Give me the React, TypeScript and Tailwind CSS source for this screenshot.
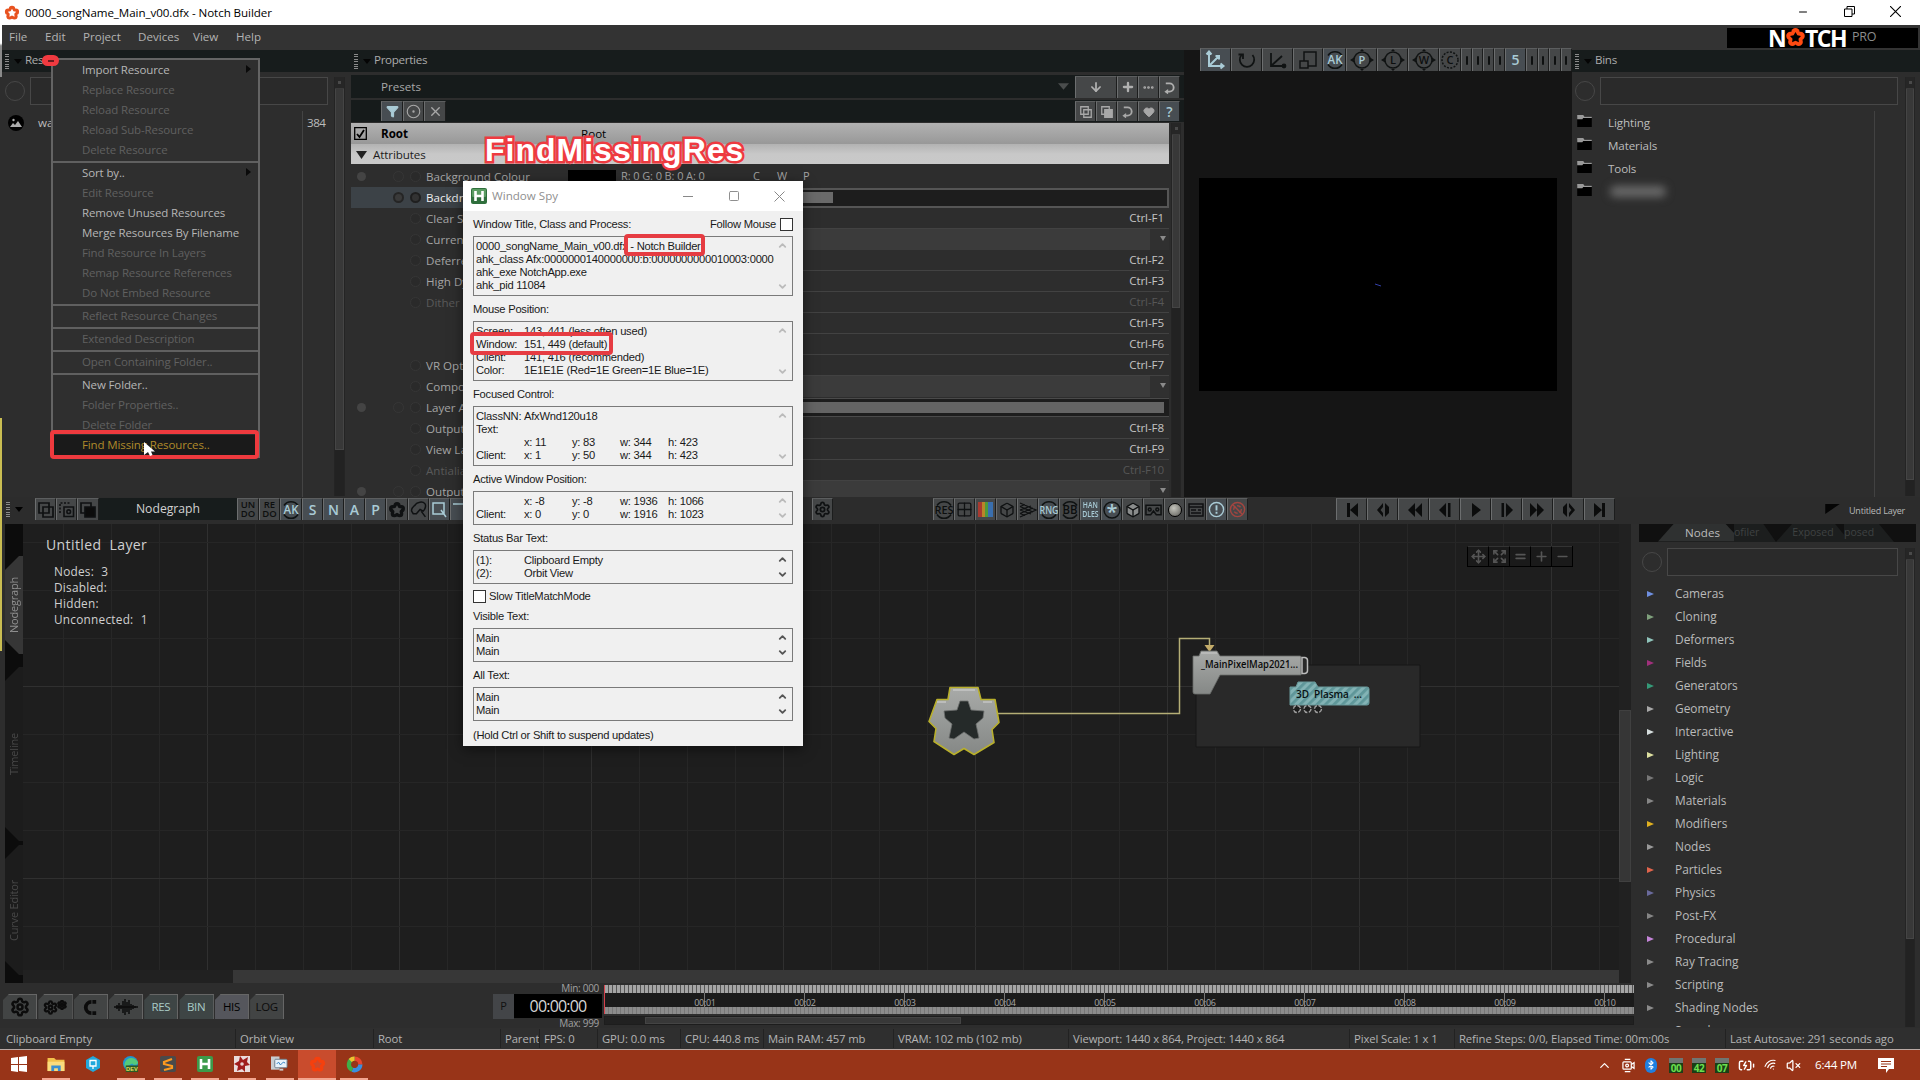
import React from 'react';
import {
  ArrowDown, Plus, MoreHorizontal, Filter, CircleDot, Heart, Settings, Box, Grid2x2,
  Bluetooth, BatteryCharging, VolumeX, ChevronUp, ChevronDown, Move, Expand, Equal, Minus, X, Wifi, Square,
} from 'lucide-react';

type Kids = { children?: React.ReactNode };

const star = (cx: number, cy: number, R: number, r: number, flip = false) =>
  Array.from({ length: 10 }, (_, i) => {
    const a = ((i * 36 - 90 + (flip ? 180 : 0)) * Math.PI) / 180;
    const q = i % 2 ? r : R;
    return `${(cx + q * Math.cos(a)).toFixed(2)},${(cy + q * Math.sin(a)).toFixed(2)}`;
  }).join(' ');

function Flower({ className, hole = '#fff' }: { className: string; hole?: string }) {
  return (
    <svg viewBox="0 0 24 24" className={'shrink-0 ' + className}>
      <g fill="currentColor">
        <circle cx="12" cy="6" r="4.8" /><circle cx="17.8" cy="10.2" r="4.8" /><circle cx="15.6" cy="17" r="4.8" />
        <circle cx="8.4" cy="17" r="4.8" /><circle cx="6.2" cy="10.2" r="4.8" />
      </g>
      <polygon points={star(12, 12.2, 6.6, 3.6)} fill={hole} />
    </svg>
  );
}

function Frames({ size = 16, fill = 'none' }: { size?: number; fill?: string }) {
  return (
    <svg viewBox="0 0 16 16" width={size} height={size} fill="none" stroke="currentColor" strokeWidth="1.7">
      <path d="M1 1h10v10H1z" /><path d="M5 5h10v10H5z" fill={fill} />
    </svg>
  );
}

function TurnBack({ flip = false }: { flip?: boolean }) {
  return (
    <svg viewBox="0 0 14 14" className={'size-[13px] ' + (flip ? '-scale-y-100' : '')}>
      <path d="M3 2.500h4a4.300 4.300 0 0 1 0 9H4.500" fill="none" stroke="currentColor" strokeWidth="2" />
      <path d="M5.500 8.500v6L1.500 11.500z" fill="currentColor" />
    </svg>
  );
}

function Grip() {
  return <div className="h-[15px] w-[4px] shrink-0 bg-[repeating-linear-gradient(to_bottom,#8a8a8a_0,#8a8a8a_1px,transparent_1px,transparent_2.4px)]" />;
}

function Caret({ className = '' }: { className?: string }) {
  return <svg viewBox="0 0 8 5" className={'h-[5px] w-[8px] shrink-0 ' + className}><path d="M0 0h8L4 5z" fill="currentColor" /></svg>;
}

function Tool({ children, on = false, className = 'w-[21px]' }: Kids & { on?: boolean; className?: string }) {
  return (
    <div
      className={
        'flex h-full shrink-0 items-center justify-center overflow-hidden border-l border-t border-r border-l-[#6c6e6f] border-t-[#5c5e5f] border-r-[#1c1d1d] font-semibold leading-none ' +
        (on ? 'bg-[#474d52] text-[#a9cbd6] ' : 'bg-[#454748] text-[#0f1112] ') + className
      }
    >
      {children}
    </div>
  );
}

function Ring({ t, arms = false, on = false }: { t: string; arms?: boolean; on?: boolean }) {
  const n = t.length;
  return (
    <svg viewBox="0 0 24 22" className="-mx-[3px] h-[22px] w-[24px] shrink-0">
      {arms || n === 1 ? (
        <circle cx="12" cy="11" r="8" fill="none" stroke="#101313" strokeWidth="1.5" strokeDasharray={t === 'C' ? '2 1.4' : undefined} />
      ) : (
        <path d="M5 6.500a8.300 8.300 0 0 1 14 0M5 15.500a8.300 8.300 0 0 0 14 0" fill="none" stroke="#101313" strokeWidth="1.500" />
      )}
      {arms && <path d="M0 11l4-2.5v5zM24 11l-4-2.5v5zM10 2h4l-2-2zM10 20h4l-2 2z" fill="#101313" />}
      <text x="12" y={t === '*' ? 20 : n > 2 ? 14.8 : 15.2} textAnchor="middle" fontSize={t === '*' ? 20 : n > 2 ? 10.5 : n > 1 ? 12.500 : 11} fontWeight="600" fontFamily="Open Sans" textLength={n > 2 ? 19 : n > 1 ? 15 : undefined} lengthAdjust="spacingAndGlyphs" fill={on ? '#a9cbd6' : '#0c0e0e'}>{t}</text>
    </svg>
  );
}

function ScrollBar({ thumb, className }: { thumb: string; className: string }) {
  return (
    <div className={'flex shrink-0 flex-col border-x border-[#242424] bg-[#222] ' + className}>
      <div className="flex h-[12px] items-center justify-center border-b border-[#3a3a3a] bg-[#262626]"><div className="size-[3px] bg-[#4a4a4a]" /></div>
      <div className={'border-x border-b border-[#454545] bg-[#383838] ' + thumb} />
    </div>
  );
}

const menus: [string, string][] = [['File', 'w-[36px]'], ['Edit', 'w-[38px]'], ['Project', 'w-[55px]'], ['Devices', 'w-[55px]'], ['View', 'w-[43px]'], ['Help', '']];

function TitleBar() {
  return (
    <header className="flex h-[25px] shrink-0 items-center bg-white pl-[4px] text-black">
      <Flower className="size-[16px] text-[#e8521f]" />
      <span className="ml-[5px] text-[11.600px] tracking-[-0.08px]">0000_songName_Main_v00.dfx - Notch Builder</span>
      <div className="ml-auto flex items-center pb-[2px] pr-[19px]">
        <Minus className="mr-[35px] size-[12px]" strokeWidth={2} />
        <svg viewBox="0 0 11 11" className="mr-[35px] size-[11px]"><path d="M.5 3h7.500v7.500H.5zM3 3V.5h7.500V8H8" fill="none" stroke="#000" /></svg>
        <svg viewBox="0 0 11 11" className="size-[11px]"><path d="M0 0l11 11M11 0L0 11" stroke="#000" strokeWidth="1.100" /></svg>
      </div>
    </header>
  );
}

function MenuBar() {
  return (
    <nav className="flex h-[25px] shrink-0 items-center bg-[#333] pb-[2px] pl-[9px] text-[11.600px] text-[#b4b4b4]">
      {menus.map(([m, w]) => <span key={m} className={w}>{m}</span>)}
      <div className="ml-auto mr-[2px] mt-[2px] flex h-[20px] w-[191px] items-center overflow-hidden bg-black pl-[41px]">
        <span className="w-[17px] text-[23px] font-bold leading-[20px] tracking-[-1px] text-white">N</span>
        <Flower className="size-[21px] text-[#ff4a12]" hole="#000" />
        <span className="-ml-px w-[42px] text-[23px] font-bold leading-[20px] tracking-[-1.500px] text-white">TCH</span>
        <span className="ml-[5px] text-[12.500px] tracking-[-0.3px] text-[#8c8c8c]">PRO</span>
      </div>
    </nav>
  );
}

function PanelHead({ title }: { title: string }) {
  return (
    <div className="flex h-[22px] shrink-0 items-center bg-[#171c1c] pl-[3px] text-[#ababab]">
      <Grip /><Caret className="ml-[5px] mr-[3px] text-[#050505]" /><span className="pb-[3px] tracking-[-0.3px]">{title}</span>
    </div>
  );
}

function Search({ className }: { className: string }) {
  return (
    <div className="flex h-[28px] shrink-0 items-center">
      <div className="size-[20px] shrink-0 rounded-full border border-[#474747]" />
      <div className={'h-[28px] border border-[#474747] bg-[#2a2a2a] ' + className} />
    </div>
  );
}

function Resources() {
  return (
    <section className="flex w-[351px] shrink-0 flex-col bg-[#2d2d2d] pl-[2px]">
      <PanelHead title="Resources" />
      <div className="flex min-h-0 flex-1 pt-[5px]">
        <div className="flex w-[332px] flex-col pl-[3px]">
          <Search className="ml-[5px] w-[298px]" />
          <div className="mt-[6px] flex flex-1 items-start text-[#bcbcbc]">
            <div className="ml-[3px] mt-[4px] flex size-[16px] items-center justify-center rounded-full bg-black">
              <svg viewBox="0 0 12 12" className="size-[12px]"><path d="M0 10l3-4 2 2 3-4 4 6z" fill="#aaa" /><circle cx="3.500" cy="3" r="1.200" fill="#aaa" /></svg>
            </div>
            <span className="ml-[14px] mt-[3px] w-[264px]">wa</span>
            <div className="h-full w-[28px] border-l border-[#444] pl-[4px] pt-[3px] tracking-[-0.5px]">384</div>
          </div>
        </div>
        <ScrollBar className="h-[419px] w-[11px]" thumb="h-[361px]" />
      </div>
    </section>
  );
}

type Prop = { n?: string; v?: string; kind?: 'drop' | 'slider' | 'color' | 'select'; dim?: boolean; dot?: boolean };
const props: Prop[] = [
  { n: 'Background Colour', kind: 'color', dot: true },
  { n: 'Backdrop Alpha', kind: 'select' },
  { n: 'Clear Screen', v: 'Ctrl-F1' },
  { n: 'Current Camera', kind: 'drop' },
  { n: 'Deferred', v: 'Ctrl-F2' },
  { n: 'High Dynamic', v: 'Ctrl-F3' },
  { n: 'Dither', v: 'Ctrl-F4', dim: true },
  { v: 'Ctrl-F5' },
  { v: 'Ctrl-F6' },
  { n: 'VR Options', v: 'Ctrl-F7' },
  { n: 'Compositing', kind: 'drop' },
  { n: 'Layer Alpha', kind: 'slider', dot: true },
  { n: 'Output', v: 'Ctrl-F8' },
  { n: 'View Layer', v: 'Ctrl-F9' },
  { n: 'Antialiasing', v: 'Ctrl-F10', dim: true },
  { n: 'Output', kind: 'drop', dot: true },
];

function PropRow({ p }: { p: Prop }) {
  const sel = p.kind === 'select';
  return (
    <div className="flex h-[21px] shrink-0 items-center">
      <div
        className={
          'flex h-full shrink-0 items-center overflow-hidden ' + (p.kind === 'color' ? 'w-[215px] ' : 'mr-[103px] w-[112px] ') +
          (sel ? 'bg-[#3c4247] text-[#eee]' : p.dim ? 'text-[#595959]' : 'text-[#a4a4a4]')
        }
      >
        <div className={'ml-[6px] size-[9px] shrink-0 rounded-full ' + (p.dot ? 'bg-[#444]' : '')} />
        <div className={'ml-[27px] size-[11px] shrink-0 rounded-full ' + (sel ? 'border-2 border-[#252525] bg-[#3a3a3a]' : p.dot ? 'border border-[#363636]' : '')} />
        <div className={'ml-[6px] size-[11px] shrink-0 rounded-full ' + (p.n ? (sel ? 'border-2 border-[#1f1f1f] bg-[#333]' : 'border border-[#363636] bg-[#2a2a2a]') : '')} />
        <span className="ml-[5px] whitespace-nowrap text-[11.600px]">{p.n}</span>
      </div>
      {p.kind === 'color' && (
        <div className="flex h-full flex-1 items-center text-[11px] text-[#a4a4a4]">
          <div className="ml-[2px] h-[13px] w-[48px] bg-black" />
          <span className="ml-[5px] w-[132px] tracking-[-0.1px]">R: 0 G: 0 B: 0 A: 0</span>
          <span className="w-[24px]">C</span><span className="w-[26px]">W</span><span>P</span>
        </div>
      )}
      {sel && (
        <div className="flex h-[20px] flex-1 items-center border-2 border-[#555] bg-[#1d1d1d] p-[3px]">
          <div className="h-[11px] w-[262px] bg-[#6a6a6a]" />
        </div>
      )}
      {p.kind === 'slider' && (
        <div className="flex h-[19px] flex-1 items-center border-y border-[#4a4a4a] bg-[#1d1d1d] pr-[5px]">
          <div className="h-[11px] flex-1 bg-[#646464]" />
        </div>
      )}
      {p.kind === 'drop' && (
        <div className="flex h-full flex-1 bg-[#3b3b3b]">
          <div className="ml-auto flex w-[19px] justify-center bg-[#303030] pt-[7px] text-[#8a8a8a]"><svg viewBox="0 0 6 5" className="ml-[6px] h-[5px] w-[6px]"><path d="M0 0h6L3 5z" fill="currentColor" /></svg></div>
        </div>
      )}
      {p.v && <div className={'flex h-full flex-1 items-center justify-end border-b border-[#424242] pr-[5px] text-[11.600px] tracking-[-0.1px] ' + (p.dim ? 'text-[#565656]' : 'text-[#c4c4c4]')}>{p.v}</div>}
    </div>
  );
}

function Properties() {
  return (
    <section className="flex w-[833px] shrink-0 flex-col overflow-hidden bg-[#2d2d2d]">
      <PanelHead title="Properties" />
      <div className="mt-[3px] flex h-[23px] items-center bg-[#161b1b] pr-[4px] text-[#a8a8a8]">
        <span className="ml-[30px] flex-1">Presets</span>
        <svg viewBox="0 0 12 7" className="mr-[6px] h-[7px] w-[11px]"><path d="M0 0h12L6 7z" fill="#4a4d4d" /></svg>
        <div className="flex h-[22px]">
          <Tool className="w-[42px] text-[#b0b0b0]!"><ArrowDown size={14} strokeWidth={3} /></Tool>
          <Tool className="w-[21px] text-[#b0b0b0]!"><Plus size={14} strokeWidth={4} /></Tool>
          <Tool className="w-[21px] text-[#b0b0b0]!"><MoreHorizontal size={13} strokeWidth={3} /></Tool>
          <Tool className="w-[21px] text-[#b0b0b0]!"><TurnBack /></Tool>
        </div>
      </div>
      <div className="mt-[2px] flex h-[22px] items-center bg-[#161b1b] pr-[4px]">
        <div className="ml-[30px] flex h-[20px]">
          <Tool on className="w-[22px]"><Filter size={13} fill="currentColor" /></Tool>
          <Tool className="w-[21px] text-[#a8a8a8]!"><CircleDot size={15} strokeWidth={1.800} /></Tool>
          <Tool className="w-[22px] text-[#a8a8a8]!"><X size={15} strokeWidth={2.200} /></Tool>
        </div>
        <div className="ml-auto flex h-[20px]">
          <Tool className="w-[21px] text-[#a8a8a8]!"><Frames size={12} /></Tool>
          <Tool className="w-[21px] text-[#a8a8a8]!"><Frames size={12} fill="currentColor" /></Tool>
          <Tool className="w-[21px] text-[#a8a8a8]!"><TurnBack /></Tool>
          <Tool className="w-[21px] text-[#a8a8a8]!"><Heart size={12} fill="currentColor" /></Tool>
          <Tool on className="w-[21px] text-[14px] font-bold">?</Tool>
        </div>
      </div>
      <div className="mt-px flex min-h-0 flex-1">
        <div className="flex w-[818px] flex-col">
          <div className="flex h-[21px] shrink-0 items-center bg-gradient-to-b from-[#b2b2b2] to-[#989898] text-black">
            <svg viewBox="0 0 13 13" className="ml-[3px] size-[13px]"><path d="M.7.7h11.600v11.600H.7z" fill="none" stroke="#000" strokeWidth="1.300" /><path d="M3 7l2.500 3L10 3" fill="none" stroke="#000" strokeWidth="1.800" /></svg>
            <span className="ml-[14px] w-[200px] text-[11.600px] font-bold">Root</span><span className="text-[11.600px]">Root</span>
          </div>
          <div className="flex h-[20px] shrink-0 items-center bg-gradient-to-b from-[#b2b2b2] via-[#c8c8c8] to-[#c9c9c9] pt-px text-[11.600px] text-[#1c1c1c]">
            <svg viewBox="0 0 11 8" className="ml-[5px] h-[8px] w-[11px]"><path d="M0 0h11L5.500 8z" fill="#222" /></svg>
            <span className="ml-[6px] tracking-[-0.1px]">Attributes</span>
          </div>
          <div className="mt-[2px] flex min-h-0 flex-1 flex-col overflow-hidden">{props.map((p, i) => <PropRow key={i} p={p} />)}</div>
        </div>
        <ScrollBar className="ml-[2px] w-[10px]" thumb="h-[173px]" />
      </div>
    </section>
  );
}

const AxisIcon = ({ c }: { c: string }) => (
  <svg viewBox="0 0 22 20" className="h-[20px] w-[22px]" stroke={c} strokeWidth="2" fill="none"><path d="M4 2v14h14M4 16L14 6M1.500 4.500L4 1.500l2.500 3M15.500 13.500l3 2.500-3 2.500M10.500 6H14v3.500" /></svg>
);

function Viewport() {
  return (
    <section className="flex w-[388px] shrink-0 flex-col bg-[#151515]">
      <div className="-mt-[2px] ml-[16px] flex h-[23px]">
        <Tool on className="w-[31px]"><AxisIcon c="#a9cbd6" /></Tool>
        <Tool className="w-[31px]"><svg viewBox="0 0 20 20" className="size-[20px]" stroke="#101313" strokeWidth="1.800" fill="none"><path d="M4.500 5a7.200 7.200 0 1 0 11 0" /><path d="M1.500 4.500H6V9" /></svg></Tool>
        <Tool className="w-[31px]"><svg viewBox="0 0 22 20" className="h-[20px] w-[22px]" stroke="#101313" strokeWidth="1.800" fill="none"><path d="M4 3v13h13M4 16L15 6" /><circle cx="17" cy="16" r="1.500" fill="#101313" /></svg></Tool>
        <Tool className="w-[30px]"><svg viewBox="0 0 20 20" className="size-[20px]" stroke="#101313" strokeWidth="1.500" fill="none"><path d="M6 11V2h12v14h-8M2 11h8v7H2z" /></svg></Tool>
        <Tool on className="w-[23px]"><Ring t="AK" on /></Tool>
        <Tool className="w-[31px]"><Ring t="P" arms on /></Tool>
        <Tool className="w-[31px]"><Ring t="L" arms /></Tool>
        <Tool className="w-[31px]"><Ring t="W" arms /></Tool>
        <Tool className="w-[22px]"><Ring t="C" /></Tool>
        {[0, 1, 2, 3].map((i) => <Tool key={i} className="w-[11px]"><div className="h-[9px] w-[2px] rounded bg-[#0e1010]" /></Tool>)}
        <Tool on className="w-[21px] text-[14px]">5</Tool>
        {[0, 1, 2, 3].map((i) => <Tool key={i} className="w-[11.500px]"><div className="h-[9px] w-[2px] rounded bg-[#0e1010]" /></Tool>)}
      </div>
      <div className="ml-[15px] mt-[107px] flex h-[213px] w-[358px] items-center justify-center bg-black">
        <svg viewBox="0 0 8 4" className="h-[4px] w-[8px]"><path d="M1 1l3 1 3 1" stroke="#3340a8" strokeWidth="1" /></svg>
      </div>
    </section>
  );
}

const FolderIcon = () => (
  <svg viewBox="0 0 17 14" className="h-[12px] w-[15px]"><path d="M0 2h17v12H0z" fill="#000" /><path d="M0 0h7l1.500 2H17v1.500H7l-1 1.500H0z" fill="#9a9a9a" /></svg>
);

function Bins() {
  return (
    <section className="flex flex-1 flex-col bg-[#2d2d2d]">
      <PanelHead title="Bins" />
      <div className="flex min-h-0 flex-1 pl-[3px] pt-[5px]">
        <div className="flex w-[330px] flex-col">
          <Search className="ml-[5px] w-[298px]" />
          <div className="mt-[6px] flex w-[300px] flex-1 flex-col border-r border-[#424242] text-[11.600px] text-[#bcbcbc]">
            {['Lighting', 'Materials', 'Tools'].map((b) => <div key={b} className="flex h-[23px] items-center tracking-[-0.1px]"><div className="mb-[3px] ml-[2px] mr-[14px] w-[17px]"><FolderIcon /></div>{b}</div>)}
            <div className="flex h-[22px] items-center"><div className="mb-[3px] ml-[2px] mr-[14px] w-[17px]"><FolderIcon /></div><div className="ml-[2px] h-[11px] w-[56px] rounded-full bg-[#6a6a6a] blur-[4px]" /></div>
          </div>
        </div>
        <ScrollBar className="h-[419px] w-[10px]" thumb="h-[391px]" />
      </div>
    </section>
  );
}

function Stack({ a, b, on = false }: { a: string; b: string; on?: boolean }) {
  return <div className={'flex flex-col items-center text-[9.500px] leading-[8.500px] ' + (a.length > 2 ? 'scale-x-[0.72] ' : '') + (on ? 'text-[#a9cbd6]' : 'text-[#0d0f0f]')}><span>{a}</span><span>{b}</span></div>;
}

const playPaths = [
  'M3 1h3v14H3zM14 1v14L6 8z',
  'M8 1L2 8l6 7V11L5.500 8 8 5zM10 1l4 4v6l-4 4z',
  'M9 1v14L2 8zM16 1v14L9 8z',
  'M9 1v14L2 8zM11 1h2.500v14H11z',
  'M4 1v14l9-7z',
  'M7 1v14l7-7zM2.500 1H5v14H2.500z',
  'M0 1v14l7-7zM7 1v14l7-7z',
  'M8 1l6 7-6 7V11l2.500-3L8 5zM6 1L2 5v6l4 4z',
  'M2 1v14l8-7zM10 1h3v14h-3z',
];

function NodeBar() {
  return (
    <div className="flex h-[27px] shrink-0 items-start bg-[#2c2c2c] pt-px">
      <div className="flex h-[22px] w-[463px] shrink-0 items-center overflow-hidden pl-[6px]">
        <Grip /><Caret className="ml-[5px] text-black" />
        <div className="ml-[12px] flex h-full shrink-0">
          <Tool className="w-[21px]"><Frames /></Tool>
          <Tool className="w-[21px]"><svg viewBox="0 0 16 16" className="size-[16px]" fill="none" stroke="currentColor" strokeWidth="1.600"><path d="M5 5h9.500v9.500H5z" /><path d="M1 11V1h11" strokeDasharray="2 1.500" /><circle cx="9.700" cy="9.700" r="1.800" /></svg></Tool>
          <Tool className="w-[22px]"><Frames fill="#0c0c0c" /></Tool>
          <div className="flex w-[138px] items-center justify-center bg-[#171c1c] text-[12.200px] text-[#d2d2d2]">Nodegraph</div>
          <Tool className="w-[22px]"><Stack a="UN" b="DO" /></Tool>
          <Tool className="w-[21px]"><Stack a="RE" b="DO" /></Tool>
          <Tool on className="w-[22px]"><Ring t="AK" on /></Tool>
          {['S', 'N', 'A', 'P'].map((c) => <Tool key={c} on className="w-[21px] text-[14px]">{c}</Tool>)}
          <Tool className="w-[22px]"><Flower className="size-[18px]" hole="#484a4b" /></Tool>
          <Tool className="w-[21px]"><svg viewBox="0 0 16 16" className="size-[17px]" fill="none" stroke="currentColor" strokeWidth="1.400"><path d="M1.500 9.500C1 6 4 5 5 3.500 6.500 1 12 0 14 2.500c1.500 2 0 5.500-1.500 7L9.500 8 6 12H3zM10.500 9.500l4 5.500" /></svg></Tool>
          <Tool on className="w-[21px]"><svg viewBox="0 0 17 17" className="size-[17px]" fill="none" stroke="currentColor" strokeWidth="1.500"><path d="M2 2h11v11H2zM10 9l5 7" /></svg></Tool>
          <Tool on className="w-[21px]"><svg viewBox="0 0 17 17" className="size-[17px]" fill="none" stroke="currentColor" strokeWidth="1.500"><path d="M1 3h11v11" /></svg></Tool>
        </div>
      </div>
      <div className="ml-[349px] flex h-[22px]">
        <Tool className="w-[21px]"><Settings size={17} strokeWidth={2.500} /></Tool>
      </div>
      <div className="ml-[100px] flex h-[22px]">
        <Tool><Ring t="RES" /></Tool>
        <Tool><Grid2x2 size={17} strokeWidth={1.800} /></Tool>
        <Tool><div className="h-[15px] w-[15px] bg-[linear-gradient(90deg,#a83a30_0_25%,#b8862a_25%_45%,#4f9a3a_45%_70%,#3a6fae_70%)]" /></Tool>
        <Tool><Box size={16} /></Tool>
        <Tool><svg viewBox="0 0 18 16" className="h-[16px] w-[18px]" fill="none" stroke="currentColor" strokeWidth="1.300"><path d="M1 1l16 7-16 7M1 4.500L14 10M1 8l11 4M1 11.500l5 2M1 11.500L14 6M1 8l11-4M1 4.500l5-2" /></svg></Tool>
        <Tool on><Ring t="RNG" on /></Tool>
        <Tool><Ring t="BB" /></Tool>
        <Tool on><Stack a="HAN" b="DLES" on /></Tool>
        <Tool on><Ring t="*" on /></Tool>
        <Tool><Box size={16} fill="#8a8c8c" /></Tool>
        <Tool><svg viewBox="0 0 18 12" className="h-[12px] w-[17px]" fill="none" stroke="currentColor" strokeWidth="1.600"><path d="M1 1h16v10h-5L9 7l-3 4H1z" /><circle cx="5" cy="5.500" r="1.500" /><circle cx="13" cy="5.500" r="1.500" /></svg></Tool>
        <Tool><div className="size-[14px] rounded-full border border-black bg-[radial-gradient(circle_at_40%_35%,#c4c4bc,#5a5a56)]" /></Tool>
        <Tool><svg viewBox="0 0 16 14" className="h-[14px] w-[16px]" fill="none" stroke="currentColor" strokeWidth="1.500"><path d="M1 1h14v12H1zM1 4h14M3 7h5M3 10h10M10 7h3" /></svg></Tool>
        <Tool on><svg viewBox="0 0 18 18" className="size-[17px]" fill="none" stroke="currentColor" strokeWidth="1.500"><circle cx="9" cy="9" r="7.500" /><path d="M9 4.500v5.500M9 11.500v2" strokeWidth="2" /></svg></Tool>
        <Tool><svg viewBox="0 0 18 18" className="size-[17px]" fill="none" stroke="#a34540" strokeWidth="1.500"><circle cx="9" cy="9" r="7.500" /><circle cx="9" cy="9" r="4" strokeDasharray="4 2" /><path d="M4 4l10 10" /></svg></Tool>
      </div>
      <div className="ml-[88px] flex h-[22px]">
        {playPaths.map((d, i) => <Tool key={i} className="w-[31px]"><svg viewBox="0 0 16 16" className="size-[16px]"><path d={d} fill="#0b0c0c" /></svg></Tool>)}
      </div>
      <svg viewBox="0 0 16 11" className="ml-[210px] mt-[6px] h-[10px] w-[15px]"><path d="M0 0h16L0 11z" fill="#050505" /></svg>
      <span className="ml-[9px] mt-[5px] text-[9px] leading-[15px] tracking-[-0.2px] text-[#b8b8b8]">Untitled Layer</span>
    </div>
  );
}

function SideTabs() {
  return (
    <div className="ml-[5px] flex w-[18px] shrink-0 flex-col bg-[#0c0c0c]">
      {[['Nodegraph', 'mt-[32px] h-[98px] bg-[#363636] text-[#8f8f8f]'], ['Timeline', 'mt-[13px] h-[174px] bg-[#1c1c1c] text-[#484848]'], ['Curve Editor', 'mt-[4px] h-[130px] bg-[#1c1c1c] text-[#484848]']].map(([t, c]) => (
        <div key={t} className={'flex w-[18px] items-center justify-center text-[11px] tracking-[-0.2px] [clip-path:polygon(0_14px,14px_0,100%_0,100%_100%,14px_100%,0_calc(100%-14px))] ' + c}>
          <span className="rotate-180 whitespace-nowrap [writing-mode:vertical-rl]">{t}</span>
        </div>
      ))}
    </div>
  );
}

function Graph() {
  return (
    <div className="relative h-[446px] w-[1596px] overflow-hidden bg-[#1e1e1e]">
      <svg viewBox="23 524 1596 446" className="h-[446px] w-[1596px]">
        <defs>
          <pattern id="hatch" width="6" height="6" patternUnits="userSpaceOnUse" patternTransform="rotate(45)"><rect width="6" height="6" fill="#83b3b5" /><rect width="2.800" height="6" fill="#5e9699" /></pattern>
          <linearGradient id="steel" x1="0" y1="0" x2="0" y2="1"><stop offset="0" stopColor="#a8aaa8" /><stop offset="1" stopColor="#858886" /></linearGradient>
        </defs>
        {Array.from({ length: 33 }, (_, i) => 63.500 + i * 48).map((x, i) => <path key={x} d={`M${x} 524v446`} stroke={i % 4 === 3 ? '#303030' : '#272727'} />)}
        {Array.from({ length: 9 }, (_, i) => 542.500 + i * 48).map((y, i) => <path key={y} d={`M23 ${y}h1596`} stroke={i % 4 === 3 ? '#303030' : '#262626'} />)}
        <path d="M998 713.500H1179.500V638.500H1209.500V650" fill="none" stroke="#b5ae76" strokeWidth="1.500" />
        <path d="M1204.500 645h10l-5 7z" fill="#c4ac6a" />
        <path d="M1196 665h224v82h-224z" fill="#292929" stroke="#161616" />
        <path d="M950 687.500l28 0 3 12 14 0 4 23-7 7 2 13-20 12-10-6-10 6-20-13 2-13-7-7 8-22h11z" fill="url(#steel)" stroke="#b9b02c" strokeWidth="1.600" strokeLinejoin="round" />
        <path d="M953 690h22M937 702h9M983 702h9" stroke="#d6d6d6" strokeWidth="1.200" />
        <polygon points="960,701 968,701 971,710 984,711 983,718 976,724 979,738 974,739 964,732 954,739 949,738 952,724 945,718 944,711 957,710" fill="#252a29" stroke="#6c6f6d" strokeWidth=".8" />
        <path d="M1193 656h6l2-5h16l3 5h80a1 1 0 0 1 1 1v18h-81l-10 19h-15a2 2 0 0 1-2-2z" fill="url(#steel)" stroke="#6b6d6b" strokeWidth=".8" />
        <path d="M1201 653h16" stroke="#c9c9c9" />
        <path d="M1302 657.500h3a3 3 0 0 1 2.500 3v10a3 3 0 0 1-2.500 3h-3z" fill="#2a2a2a" stroke="#bbb" strokeWidth="1.500" />
        <text x="1201" y="668" fontFamily="Open Sans" fontSize="10" fontWeight="600" textLength="97" lengthAdjust="spacingAndGlyphs" fill="#0a0a0a">_MainPixelMap2021...</text>
        <path d="M1292 687h4l2-5h17l3 5h49a2 2 0 0 1 2 2v14a2 2 0 0 1-2 2h-77v-18z" fill="url(#hatch)" stroke="#6a9a9c" />
        <text x="1296" y="698" fontFamily="Open Sans" fontSize="10" fontWeight="600" fill="#0a1213" xmlSpace="preserve" textLength="66">3D  Plasma  ...</text>
        {[1297, 1307.500, 1318].map((x) => <circle key={x} cx={x} cy="709" r="3.500" fill="#1c1c1c" stroke="#a0a0a0" strokeWidth="1.400" strokeDasharray="4 1.500" />)}
      </svg>
      <div className="absolute left-[23px] top-[10px] text-[#d0d0d0]">
        <div className="text-[14px] leading-[21px] tracking-[0.4px] [word-spacing:4px]">Untitled Layer</div>
        <div className="ml-[8px] mt-[8px] text-[11.800px] leading-[16px] tracking-[0.25px] [word-spacing:4px]">
          {['Nodes: 3', 'Disabled:', 'Hidden:', 'Unconnected: 1'].map((t) => <div key={t}>{t}</div>)}
        </div>
      </div>
      <div className="absolute left-[1444px] top-[22px] flex h-[21px] border-b border-r border-black text-[#555]">
        {[Move, Expand, Equal, Plus, Minus].map((I, i) => <div key={i} className="flex w-[21px] items-center justify-center border-l border-t border-black border-t-[#333] bg-[#1a1a1a]"><I size={15} strokeWidth={2.600} /></div>)}
      </div>
    </div>
  );
}

const nodeCats: [string, string][] = [
  ['Cameras', '#6f8fe0'], ['Cloning', '#7fa07c'], ['Deformers', '#8fc3ba'], ['Fields', '#a0307c'], ['Generators', '#359a78'],
  ['Geometry', '#a8a8a8'], ['Interactive', '#d6dede'], ['Lighting', '#dde0a0'], ['Logic', '#777'], ['Materials', '#868686'],
  ['Modifiers', '#e0b020'], ['Nodes', '#999'], ['Particles', '#e0644c'], ['Physics', '#6a6a9c'], ['Post-FX', '#858585'],
  ['Procedural', '#c484d8'], ['Ray Tracing', '#8b8b8b'], ['Scripting', '#8b8b8b'], ['Shading Nodes', '#8b8b8b'], ['Sound', '#8b8b8b'],
];

function NodesPanel() {
  return (
    <aside className="flex h-[503px] w-[281px] shrink-0 flex-col pr-[4px]">
      <div className="flex h-[18px] shrink-0 items-center bg-[#101010] text-[10.500px] text-[#3f4242]">
        <div className="-mt-px ml-[19px] flex h-full w-[84px] items-center justify-center bg-[#2f3131] pl-[5px] text-[11.600px] text-[#bcbcbc] [clip-path:polygon(16px_0,80%_0,100%_100%,0_100%)]">Nodes</div>
        <div className="-ml-[8px] flex h-full w-[42px] items-center bg-[#1c1e1e] [clip-path:polygon(0_0,70%_0,100%_100%,0_100%)]">ofiler</div>
        <div className="flex h-full w-[74px] items-center justify-center bg-[#1c1e1e] [clip-path:polygon(16px_0,80%_0,100%_100%,0_100%)]">Exposed</div>
        <div className="-ml-[6px] flex h-full w-[50px] items-center bg-[#1c1e1e] [clip-path:polygon(0_0,70%_0,100%_100%,0_100%)]">posed</div>
      </div>
      <div className="flex min-h-0 flex-1 pl-[3px] pt-[6px]">
        <div className="flex w-[263px] flex-col">
          <Search className="ml-[5px] w-[231px]" />
          <div className="mt-[6px] flex min-h-0 flex-1 flex-col overflow-hidden text-[11.900px] text-[#bababa]">
            {nodeCats.map(([n, c]) => (
              <div key={n} className="flex h-[23px] shrink-0 items-center">
                <svg viewBox="0 0 7 6" className="ml-[5px] mr-[21px] h-[6px] w-[7px]"><path d="M0 0l7 3-7 3z" fill={c} /></svg>
                <span>{n}</span>
              </div>
            ))}
          </div>
        </div>
        <ScrollBar className="w-[10px]" thumb="h-[379px]" />
      </div>
    </aside>
  );
}

const chips: React.ReactNode[] = [
  <Settings size={20} strokeWidth={3} />,
  <span className="flex items-center"><Settings size={15} strokeWidth={3.500} /><Settings size={10} strokeWidth={5} className="-ml-px mb-[4px]" /></span>,
  <svg viewBox="0 0 18 18" className="size-[17px]"><path d="M10 3a6 6 0 1 0 0 12" fill="none" stroke="#0c0c0c" strokeWidth="4" /><path d="M11 1h4v4h-4zM11 13h4v4h-4z" fill="#0c0c0c" /></svg>,
  <svg viewBox="0 0 24 16" className="h-[16px] w-[24px]"><path d="M0 8h24M3 6v4M5 4v8M7 6v4M9 2v12M11 0v16M13 3v10M15 1v14M17 5v6M19 6v4M21 7v2" stroke="#0c0c0c" strokeWidth="1.500" /></svg>,
  'RES', 'BIN', 'HIS', 'LOG',
];

function Timeline() {
  return (
    <div className="flex h-[45px] w-[1634px] shrink-0">
      <div className="ml-[3px] mt-[11px] flex h-[25px] w-[490px] shrink-0 gap-px">
        {chips.map((c, i) => (
          <div key={i} className={'flex w-[34.300px] items-center justify-center border-t border-r border-[#666] text-[11.500px] tracking-[-0.3px] [clip-path:polygon(6px_0,100%_0,100%_100%,0_100%,0_6px)] ' + (i === 6 ? 'bg-[#55565c] text-black' : i === 4 || i === 5 ? 'bg-[#3e4545] text-[#a9cbc6]' : 'bg-[#424444] text-[#0c0c0c]')}>{c}</div>
        ))}
      </div>
      <div className="mt-[11px] flex h-[25px] w-[21px] shrink-0 items-center justify-center bg-[#434548] text-[11px] text-[#111]">P</div>
      <div className="flex w-[90px] shrink-0 flex-col text-[10px] text-[#a0a0a0]">
        <div className="h-[11px] pr-[5px] text-right leading-[11px] tracking-[-0.3px]">Min: 000</div>
        <div className="flex h-[24px] w-[88px] items-center justify-center bg-black text-[16px] tracking-[-0.8px] text-[#d6d6d6]">00:00:00</div>
        <div className="h-[10px] pr-[5px] text-right leading-[11px] tracking-[-0.3px]">Max: 999</div>
      </div>
      <div className="flex min-w-0 flex-1 flex-col pt-[2px]">
        <div className="flex flex-col border-l border-[#d8404c] bg-[#1b1b1b]">
          <div className="h-[8px] bg-[repeating-linear-gradient(90deg,#a5a5a5_0,#a5a5a5_3px,#555_3px,#555_4px)]" />
          <div className="flex h-[14px] overflow-hidden bg-[linear-gradient(90deg,transparent_99px,#777_99px)] bg-[length:100px_100%] pl-[50px] text-[9px] leading-[20px] tracking-[-0.3px] text-[#a8a8a8]">
            {Array.from({ length: 10 }, (_, i) => <span key={i} className="w-[100px] shrink-0 text-center">{'00:' + String(i + 1).padStart(2, '0')}</span>)}
          </div>
          <div className="h-[7px] bg-[repeating-linear-gradient(90deg,#8c8c8c_0,#8c8c8c_3px,#777_3px,#777_4px)]" />
        </div>
        <div className="mt-[2px] flex h-[9px] border border-[#1d1d1d] bg-[#212121] pl-[40px]"><div className="w-[316px] border border-[#444] bg-[#383838]" /></div>
      </div>
    </div>
  );
}

const status: [string, string][] = [
  ['Clipboard Empty', 'w-[233px] pl-[3px]'], ['Orbit View', 'w-[138px]'], ['Root', 'w-[127px]'], ['Parent', 'w-[39px]'], ['FPS: 0', 'w-[58px]'], ['GPU: 0.0 ms', 'w-[83px]'],
  ['CPU: 440.8 ms', 'w-[83px]'], ['Main RAM: 457 mb', 'w-[130px]'], ['VRAM: 102 mb (102 mb)', 'w-[175px]'], ['Viewport: 1440 x 864, Project: 1440 x 864', 'w-[281px]'],
  ['Pixel Scale: 1 x 1', 'w-[105px]'], ['Refine Steps: 0/0, Elapsed Time: 00m:00s', 'w-[271px]'], ['Last Autosave: 291 seconds ago', 'flex-1'],
];

function StatusBar() {
  return (
    <footer className="flex h-[22px] shrink-0 items-center border-b border-[#b9a9a4] bg-[#2f2f2f] pl-[2px] text-[11.300px] tracking-[-0.1px] text-[#b4b4b4]">
      {status.map(([t, w], i) => <div key={t} className={'flex h-[19px] shrink-0 items-center whitespace-nowrap pl-[4px] pt-[2px] ' + (i ? 'border-l border-[#222] ' : '') + w}>{t}</div>)}
    </footer>
  );
}

const taskIcons: React.ReactNode[] = [
  <svg viewBox="0 0 16 16" className="size-[16px]"><path d="M0 2l7-1v7H0zM8 1l8-1v8H8zM0 9h7v7l-7-1zM8 9h8v7l-8-1z" fill="#fff" /></svg>,
  <svg viewBox="0 0 18 16" className="h-[15px] w-[18px]"><path d="M0 1h7l2 2h9v12H0z" fill="#f3c14b" /><path d="M0 5h18v10H0z" fill="#fbdc7d" /><path d="M4 15V9h10v6h-3v-3H7v3z" fill="#3b8fd0" /></svg>,
  <svg viewBox="0 0 16 16" className="size-[16px]"><path d="M8 0l7 4v8l-7 4-7-4V4z" fill="#22a9dc" /><path d="M5 4.500h6v5.500H5zM8 10v3" fill="none" stroke="#fff" strokeWidth="1.300" /></svg>,
  <svg viewBox="0 0 18 18" className="size-[17px]"><circle cx="9" cy="8" r="8" fill="#2094cf" /><path d="M3 12A7 7 0 0 1 17 7c0 3-6 3-6 1" fill="#54c97b" /><rect x="4" y="10" width="13" height="7" fill="#2b5b23" /><text x="10.500" y="16" fontSize="6" fontWeight="700" textAnchor="middle" fill="#e8e060" fontFamily="Liberation Sans">DEV</text></svg>,
  <svg viewBox="0 0 16 16" className="size-[16px]"><rect width="16" height="16" rx="2" fill="#4a4a4a" /><path d="M12 3L4 6v2l8 2v2l-8 2" fill="none" stroke="#ff9a1e" strokeWidth="2.200" /></svg>,
  <svg viewBox="0 0 16 16" className="size-[16px]"><rect width="16" height="16" rx="2" fill="#3c9a4a" /><path d="M4 3v10M12 3v10M4 8h8" stroke="#fff" strokeWidth="2.600" /></svg>,
  <svg viewBox="0 0 16 16" className="size-[16px]"><rect width="16" height="16" fill="#eadcdc" /><path d="M6 0l3 4 5-3-1 5 3 3-5 1v6l-3-3-5 2 1-5-4-2 5-3z" fill="#a01c1c" /><circle cx="8" cy="8" r="1.800" fill="#e8d0d0" /></svg>,
  <svg viewBox="0 0 18 16" className="h-[16px] w-[17px]"><rect x="0" y="0" width="9" height="14" fill="#c8ccd0" /><rect x="4" y="3" width="13" height="9" rx="1" fill="#e8f2fa" stroke="#6a7c8a" /><path d="M6 8l2-2 2 3 3-3 2 1" fill="none" stroke="#2a7bc0" /><path d="M9 13h4v2H9z" fill="#ccc" /></svg>,
  <Flower className="size-[17px] text-[#f5400e]" hole="#d0492a" />,
  <svg viewBox="0 0 16 16" className="size-[17px]" fill="none" strokeWidth="4"><path d="M8 2.500A5.500 5.500 0 0 1 13.500 8" stroke="#e8452f" /><path d="M13.500 8A5.500 5.500 0 0 1 6 13" stroke="#3a8ee0" /><path d="M6 13A5.500 5.500 0 0 1 8 2.500" stroke="#3fae48" /><path d="M4 4.200A5.500 5.500 0 0 1 8 2.500" stroke="#f2c02e" /></svg>,
];

function Chip({ t }: { t: string }) {
  return <div className="flex h-[15px] w-[14px] items-end justify-center border-t-[5px] border-[#6f7673] bg-[#1b3d16] text-[10px] font-bold leading-[10px] tracking-[-0.5px] text-[#6be04e]">{t}</div>;
}

function Taskbar() {
  return (
    <div className="flex h-[30px] shrink-0 bg-[#983418] text-white">
      {taskIcons.map((ic, i) => (
        <div key={i} className={'flex h-full w-[37.300px] shrink-0 flex-col items-center justify-between ' + (i === 8 ? 'bg-[#c94c2d]' : '')}>
          <div className="flex flex-1 items-center">{ic}</div>
          <div className={'h-[2px] w-[28px] ' + ([0, 2].includes(i) ? '' : 'bg-[#f3a58f] ') + (i === 8 ? 'w-full!' : '')} />
        </div>
      ))}
      <div className="ml-auto flex items-center pr-[26px]">
        <ChevronUp size={15} className="mr-[10px]" />
        <svg viewBox="0 0 14 16" className="mr-[10px] h-[15px] w-[13px]" fill="none" stroke="#fff" strokeWidth="1.300"><rect x="1" y="4" width="9" height="8" rx="1" /><path d="M10 7l3-2v6l-3-2M3 1.500h6M3 14.500h6" /><circle cx="5.500" cy="8" r="1.500" /></svg>
        <div className="mr-[12px] flex h-[15px] w-[12px] items-center justify-center rounded-full bg-[#1f7fe0]"><Bluetooth size={10} strokeWidth={2.500} /></div>
        <div className="flex gap-[9px]"><Chip t="00" /><Chip t="42" /><Chip t="07" /></div>
        <BatteryCharging size={17} className="ml-[9px]" />
        <Wifi size={14} className="ml-[9px] rotate-[-30deg]" />
        <VolumeX size={15} className="ml-[8px]" />
        <span className="ml-[14px] w-[42px] whitespace-nowrap text-[11.600px] tracking-[-0.2px]">6:44 PM</span>
        <svg viewBox="0 0 16 15" className="ml-[21px] h-[15px] w-[16px]"><path d="M0 0h16v11h-5l-3 4v-4H0z" fill="#fff" /><path d="M3 3.500h10M3 6h10M3 8.500h6" stroke="#983418" /></svg>
      </div>
    </div>
  );
}

const ctx: ([string, 'on' | 'off' | 'sub' | 'hot'] | null)[] = [
  ['Import Resource', 'sub'], ['Replace Resource', 'off'], ['Reload Resource', 'off'], ['Reload Sub-Resource', 'off'], ['Delete Resource', 'off'], null,
  ['Sort by..', 'sub'], ['Edit Resource', 'off'], ['Remove Unused Resources', 'on'], ['Merge Resources By Filename', 'on'], ['Find Resource In Layers', 'off'],
  ['Remap Resource References', 'off'], ['Do Not Embed Resource', 'off'], null, ['Reflect Resource Changes', 'off'], null, ['Extended Description', 'off'], null,
  ['Open Containing Folder..', 'off'], null, ['New Folder..', 'on'], ['Folder Properties..', 'off'], ['Delete Folder', 'off'], ['Find Missing Resources..', 'hot'],
];

function ContextMenu() {
  return (
    <div className="absolute left-[51px] top-[58px] flex w-[209px] flex-col border-2 border-[#646464] bg-[#2f2f2f] pb-px text-[11.500px] tracking-[-0.12px]">
      {ctx.map((c, i) =>
        c ? (
          <div key={i} className={'flex h-[20px] items-center pl-[29px] pr-[7px] ' + (c[1] === 'off' ? 'text-[#606060]' : c[1] === 'hot' ? 'bg-[#1a1a1a] text-[#b08a2a]' : 'text-[#b6b6b6]')}>
            <span className="flex-1 whitespace-nowrap">{c[0]}</span>
            {c[1] === 'sub' && <svg viewBox="0 0 5 8" className="mb-[3px] h-[8px] w-[5px]"><path d="M0 0l5 4-5 4z" fill="#0a0a0a" /></svg>}
          </div>
        ) : (
          <div key={i} className="flex h-[3px] items-center"><div className="h-[2px] w-full bg-[#606060]" /></div>
        ),
      )}
    </div>
  );
}

type SpyBlock = { label: string; h: string; rows: string[][]; strong?: boolean };
const spy: SpyBlock[] = [
  { label: '', h: 'h-[60px]', rows: [['0000_songName_Main_v00.dfx - Notch Builder'], ['ahk_class Afx:0000000140000000:b:0000000000010003:0000('], ['ahk_exe NotchApp.exe'], ['ahk_pid 11084']] },
  { label: 'Mouse Position:', h: 'h-[60px]', rows: [['Screen:', '143, 441 (less often used)'], ['Window:', '151, 449 (default)'], ['Client:', '141, 416 (recommended)'], ['Color:', '1E1E1E (Red=1E Green=1E Blue=1E)']] },
  { label: 'Focused Control:', h: 'h-[60px]', rows: [['ClassNN:', 'AfxWnd120u18'], ['Text:'], ['', 'x: 11', 'y: 83', 'w: 344', 'h: 423'], ['Client:', 'x: 1', 'y: 50', 'w: 344', 'h: 423']] },
  { label: 'Active Window Position:', h: 'h-[34px]', rows: [['', 'x: -8', 'y: -8', 'w: 1936', 'h: 1066'], ['Client:', 'x: 0', 'y: 0', 'w: 1916', 'h: 1023']] },
  { label: 'Status Bar Text:', h: 'h-[34px]', strong: true, rows: [['(1):', 'Clipboard Empty'], ['(2):', 'Orbit View']] },
  { label: 'Visible Text:', h: 'h-[34px]', strong: true, rows: [['Main'], ['Main']] },
  { label: 'All Text:', h: 'h-[34px]', strong: true, rows: [['Main'], ['Main']] },
];

function SpyRow({ r }: { r: string[] }) {
  if (r.length === 1) return <div className="h-[13px] whitespace-nowrap leading-[13px]">{r[0]}</div>;
  return (
    <div className="grid h-[13px] grid-cols-[48px_48px_48px_48px_1fr] leading-[13px]">
      {r.map((c, i) => <span key={i} className="whitespace-nowrap">{c}</span>)}
    </div>
  );
}

function WindowSpy() {
  return (
    <div className="absolute left-[463px] top-[181px] flex h-[565px] w-[340px] flex-col bg-[#f0f0f0] font-['Liberation_Sans'] text-[11.200px] tracking-[-0.25px] text-[#1a1a1a] shadow-[0_3px_12px_rgba(0,0,0,0.5)]">
      <div className="flex h-[30px] shrink-0 items-center bg-white pl-[8px] pr-[18px] font-['Open_Sans'] tracking-normal text-[#8f8f8f]">
        <svg viewBox="0 0 16 16" className="size-[16px]"><rect width="16" height="16" rx="2" fill="#2f6f3c" /><rect x="1" y="1" width="14" height="8" rx="1" fill="#5a9c62" /><path d="M4.500 3v10M11.500 3v10M4.500 8h7" stroke="#fff" strokeWidth="2.600" /></svg>
        <span className="ml-[5px] flex-1 text-[11.600px]">Window Spy</span>
        <div className="mr-[35px] h-px w-[10px] bg-[#888]" />
        <Square size={12} strokeWidth={2} className="mr-[34px]" />
        <svg viewBox="0 0 11 11" className="size-[11px]"><path d="M.5.5l10 10M10.500.5l-10 10" stroke="#888" /></svg>
      </div>
      <div className="flex flex-1 flex-col px-[10px] pt-[4px]">
        <div className="mb-[3px] flex h-[18px] shrink-0 items-center"><span className="flex-1">Window Title, Class and Process:</span><span>Follow Mouse</span><div className="ml-[4px] size-[13px] border border-[#333] bg-white" /></div>
        {spy.map((b) => (
          <React.Fragment key={b.label}>
            {b.label && <div className="flex h-[25px] shrink-0 items-center pt-[2px]">{b.label}</div>}
            <div className={'flex shrink-0 border border-[#7a7a7a] ' + b.h}>
              <div className="flex-1 overflow-hidden py-[3px] pl-[2px]"><div className="w-[298px] overflow-hidden">{b.rows.map((r, i) => <SpyRow key={i} r={r} />)}</div></div>
              <div className={'flex w-[17px] flex-col items-center justify-between py-[3px] ' + (b.strong ? 'text-[#555]' : 'text-[#bbb]')}>
                <ChevronUp size={11} strokeWidth={4} className="mr-[2px]" /><ChevronDown size={11} strokeWidth={4} className="mr-[2px]" />
              </div>
            </div>
            {b.label === 'Status Bar Text:' && <div className="mt-[6px] flex h-[13px] shrink-0 items-center"><div className="mr-[3px] size-[13px] border border-[#333] bg-white" />Slow TitleMatchMode</div>}
          </React.Fragment>
        ))}
        <div className="flex h-[27px] shrink-0 items-center pt-px">(Hold Ctrl or Shift to suspend updates)</div>
      </div>
    </div>
  );
}

export default function App() {
  return (
    <div className="relative flex h-[1080px] w-[1920px] flex-col overflow-hidden bg-[#2d2d2d] font-['Open_Sans',sans-serif] text-[11.600px]">
      <TitleBar />
      <MenuBar />
      <main className="flex h-[447px] shrink-0"><Resources /><Properties /><Viewport /><Bins /></main>
      <NodeBar />
      <div className="flex h-[504px] shrink-0">
        <div className="flex w-[1639px] shrink-0 flex-col">
          <div className="flex h-[459px] shrink-0">
            <SideTabs />
            <div className="flex flex-col">
              <Graph />
              <div className="flex h-[13px] bg-[#212121]"><div className="ml-[210px] flex-1 bg-[#373737]" /></div>
            </div>
            <div className="flex w-[12px] flex-col bg-[#212121] pt-[186px]"><div className="h-[172px] border border-[#404040] bg-[#363636]" /></div>
          </div>
          <Timeline />
        </div>
        <NodesPanel />
      </div>
      <StatusBar />
      <Taskbar />

      <div className="absolute left-0 top-[25px] h-[52px] w-[2px] bg-gradient-to-b from-white from-35% to-[#8a8a8a] to-40%" />
      <div className="absolute left-0 top-[418px] h-[233px] w-[2px] bg-[#c9bd52]" />
      <ContextMenu />
      <div className="absolute left-[42px] top-[55px] flex h-[11px] w-[17px] items-center justify-center rounded-full bg-[#f03a40]"><div className="h-[2px] w-[6px] bg-[#6a1a1e]" /></div>
      <div className="absolute left-[50px] top-[430px] h-[29px] w-[209px] rounded-[4px] border-4 border-[#ee3a3e]" />
      <svg viewBox="0 0 11 14" className="absolute left-[144px] top-[442px] h-[14px] w-[11px]"><path d="M0 0v13l4-3 2 4 2.500-1L7 9.500h4z" fill="#fff" /></svg>
      <WindowSpy />
      <div className="absolute left-[624px] top-[234px] h-[22px] w-[81px] rounded-[4px] border-4 border-[#e63c42]" />
      <div className="absolute left-[470px] top-[332px] h-[23px] w-[143px] rounded-[4px] border-4 border-[#e63c42]" />
      <div className="absolute left-[485px] top-[132px] whitespace-nowrap font-['Liberation_Sans'] text-[32px] font-bold leading-[36px] tracking-[1px] text-white [-webkit-text-stroke:5px_#ee3a40] [paint-order:stroke]">FindMissingRes</div>
    </div>
  );
}
